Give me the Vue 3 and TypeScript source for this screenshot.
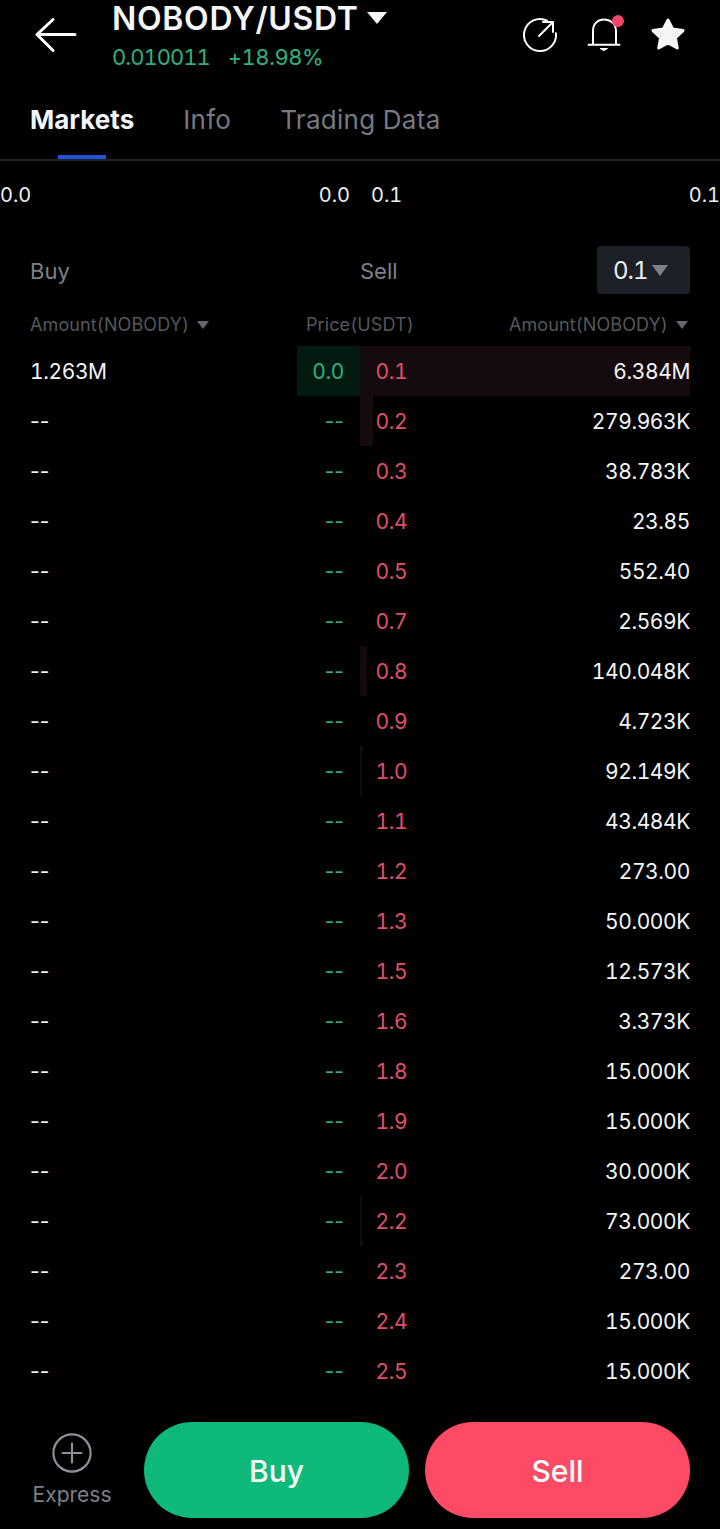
<template>
  <div class="page">
    <header class="top">
      <svg class="back" width="42" height="34" viewBox="0 0 42 34" fill="none" stroke="#fff" stroke-width="3" stroke-linecap="round" stroke-linejoin="round">
        <path d="M2 16.5H40M18 1.5L2 16.5L18 32.5" />
      </svg>
      <div class="pair">
        <div class="pair-name">NOBODY/USDT<i class="caret-white"></i></div>
        <div class="pair-sub"><span class="last">0.010011</span><span class="change">+18.98%</span></div>
      </div>
      <div class="top-icons">
        <svg width="34" height="36" viewBox="0 0 34 36" fill="none" stroke="#fff" stroke-width="2" stroke-linecap="round" stroke-linejoin="round">
          <path d="M24 3.6A16 16 0 1 0 32.9 16.2" />
          <path d="M16 19L30 5M20 5H30V15" />
        </svg>
        <div class="bell">
          <svg width="34" height="36" viewBox="0 0 34 36" fill="none" stroke="#fff" stroke-width="2" stroke-linecap="round" stroke-linejoin="round">
            <path d="M2.5 27.7H33.5M7 27.7V14C7 7 11.5 2.5 18 2.5S30 7 30 14V27.7" />
            <path d="M14.5 31.5H21.5L18 33.5Z" fill="#fff" stroke-width="1" />
          </svg>
          <i class="dot"></i>
        </div>
        <svg width="36" height="34" viewBox="0 0 36 34" fill="#f4f5f6" stroke="#f4f5f6" stroke-width="3" stroke-linejoin="round">
          <path d="M19 3L23.6 12L34 13.6L26.4 20.8L28.3 31L19 26L9.7 31L11.6 20.8L4 13.6L14.4 12Z" />
        </svg>
      </div>
    </header>

    <nav class="tabs">
      <a v-for="(tab, i) in tabs" :key="tab" class="tab" :class="{ active: i === 0 }">{{ tab }}</a>
    </nav>

    <div class="scale">
      <div class="scale-half"><span>0.0</span><span>0.0</span></div>
      <div class="scale-half right"><span>0.1</span><span>0.1</span></div>
    </div>

    <div class="book-head">
      <span class="side left">Buy</span>
      <span class="side">Sell</span>
      <div class="step">0.1<i class="caret-grey"></i></div>
    </div>

    <div class="cols">
      <span class="col-l">Amount(NOBODY)<i class="caret-small"></i></span>
      <span class="col-c">Price(USDT)</span>
      <span class="col-r">Amount(NOBODY)<i class="caret-small"></i></span>
    </div>

    <div class="rows">
      <div v-for="row in rows" :key="row.ask" class="row">
        <div class="bid">
          <i v-if="row.bidDepth" class="bid-depth" :style="{ width: row.bidDepth + 'px' }"></i>
          <span class="amount" :class="{ empty: row.bidAmount === '--' }">{{ row.bidAmount }}</span>
          <span class="bid-price" :class="{ empty: row.bid === '--' }">{{ row.bid }}</span>
        </div>
        <div class="ask">
          <i v-if="row.depth" class="ask-depth" :style="{ width: row.depth + 'px' }"></i>
          <span class="ask-price">{{ row.ask }}</span>
          <span class="amount">{{ row.amount }}</span>
        </div>
      </div>
    </div>

    <footer class="bottom">
      <div class="express">
        <svg width="40" height="40" viewBox="0 0 40 40" fill="none" stroke="#8e9097" stroke-width="2.2" stroke-linecap="round">
          <circle cx="20" cy="20" r="18.6" />
          <path d="M20 10.5V29.5M10.5 20H29.5" />
        </svg>
        <span>Express</span>
      </div>
      <button class="btn buy">Buy</button>
      <button class="btn sell">Sell</button>
    </footer>
  </div>
</template>

<script setup lang="ts">
interface Row {
  bid: string;
  bidAmount: string;
  bidDepth: number;
  ask: string;
  amount: string;
  depth: number;
}

const tabs = ['Markets', 'Info', 'Trading Data'];

const asks: [string, string, number][] = [
  ['0.1', '6.384M', 330],
  ['0.2', '279.963K', 13],
  ['0.3', '38.783K', 0],
  ['0.4', '23.85', 0],
  ['0.5', '552.40', 0],
  ['0.7', '2.569K', 0],
  ['0.8', '140.048K', 7],
  ['0.9', '4.723K', 0],
  ['1.0', '92.149K', 2],
  ['1.1', '43.484K', 0],
  ['1.2', '273.00', 0],
  ['1.3', '50.000K', 0],
  ['1.5', '12.573K', 0],
  ['1.6', '3.373K', 0],
  ['1.8', '15.000K', 0],
  ['1.9', '15.000K', 0],
  ['2.0', '30.000K', 0],
  ['2.2', '73.000K', 2],
  ['2.3', '273.00', 0],
  ['2.4', '15.000K', 0],
  ['2.5', '15.000K', 0],
];

const rows: Row[] = asks.map(([ask, amount, depth], i) => ({
  bid: i === 0 ? '0.0' : '--',
  bidAmount: i === 0 ? '1.263M' : '--',
  bidDepth: i === 0 ? 63 : 0,
  ask,
  amount,
  depth,
}));
</script>

<style>
html,
body {
  background: #000;
}
</style>

<style scoped>
.page {
  width: 720px;
  height: 1529px;
  background: #000;
  color: #fff;
  font-family: Inter, "Noto Sans", "Liberation Sans", sans-serif;
  font-variant-numeric: tabular-nums;
  overflow: hidden;
}

.top {
  height: 80px;
  display: flex;
  position: relative;
}

.back {
  margin: 18px 0 0 35px;
}

.pair {
  margin-left: 35px;
}

.pair-name {
  height: 38px;
  line-height: 38px;
  font-size: 32px;
  font-weight: 600;
  letter-spacing: 0.7px;
  color: #f4f5f6;
  display: flex;
  align-items: center;
}

.caret-white {
  width: 0;
  height: 0;
  margin: 0 0 3px 8px;
  border-left: 10px solid transparent;
  border-right: 10px solid transparent;
  border-top: 12px solid #f4f5f6;
}

.pair-sub {
  margin-top: 6px;
  display: flex;
  gap: 18px;
  font-size: 22px;
  line-height: 26px;
  color: #2cb27e;
}

.last {
  letter-spacing: -1px;
}

.change {
  letter-spacing: -0.5px;
}

.top-icons {
  margin-left: auto;
  padding: 17px 35px 0 0;
  display: flex;
  align-items: flex-start;
  gap: 29px;
}

.bell {
  position: relative;
  width: 34px;
  height: 36px;
}

.bell svg {
  overflow: visible;
}

.dot {
  position: absolute;
  top: -2px;
  right: -4px;
  width: 12px;
  height: 12px;
  border-radius: 50%;
  background: #f0466b;
}

.tabs {
  height: 81px;
  box-sizing: border-box;
  padding: 0 30px;
  display: flex;
  gap: 49px;
  border-bottom: 2px solid #232428;
}

.tab {
  position: relative;
  line-height: 80px;
  font-size: 26px;
  letter-spacing: 0.3px;
  color: #777a82;
}

.tab.active {
  font-weight: 700;
  letter-spacing: 0;
  color: #f4f5f6;
}

.tab.active::after {
  content: "";
  position: absolute;
  left: 28px;
  bottom: 0;
  width: 48px;
  height: 4px;
  background: #2354d8;
}

.scale {
  height: 68px;
  display: flex;
  font-size: 20px;
  line-height: 68px;
  color: #eceef0;
}

.scale-half {
  width: 360px;
  box-sizing: border-box;
  padding-right: 10px;
  display: flex;
  justify-content: space-between;
}

.scale-half.right {
  padding: 0 0 0 11px;
}

.book-head {
  height: 48px;
  margin-top: 17px;
  padding: 0 30px;
  display: flex;
  align-items: center;
  font-size: 22px;
  color: #7d8088;
}

.side {
  padding-top: 2px;
}

.side.left {
  width: 330px;
}

.step {
  margin-left: auto;
  width: 93px;
  height: 48px;
  box-sizing: border-box;
  padding-left: 16px;
  display: flex;
  align-items: center;
  gap: 4px;
  border-radius: 4px;
  background: #1d2026;
  color: #eceef0;
  font-size: 24px;
  letter-spacing: -1px;
}

.caret-grey {
  width: 0;
  height: 0;
  border-left: 8.5px solid transparent;
  border-right: 8.5px solid transparent;
  border-top: 11px solid #7f828a;
}

.cols {
  height: 52px;
  box-sizing: border-box;
  padding: 8px 30px 0;
  display: flex;
  align-items: center;
  font-size: 18px;
  letter-spacing: 0.1px;
  color: #55575d;
}

.col-l {
  width: 276px;
}

.col-r {
  margin: 0 2px 0 auto;
}

.caret-small {
  display: inline-block;
  margin-left: 8px;
  vertical-align: 2px;
  border-left: 6px solid transparent;
  border-right: 6px solid transparent;
  border-top: 8px solid #66686e;
}

.rows {
  height: 1050px;
}

.row {
  height: 50px;
  display: flex;
  font-size: 21px;
  line-height: 52px;
  letter-spacing: -0.4px;
}

.bid,
.ask {
  position: relative;
  width: 360px;
  box-sizing: border-box;
  display: flex;
  justify-content: space-between;
}

.bid {
  padding: 0 16px 0 30px;
}

.ask {
  padding: 0 30px 0 15.5px;
}

.bid-depth,
.ask-depth {
  position: absolute;
  top: 0;
  height: 50px;
}

.bid-depth {
  right: 0;
  background: #031a10;
}

.ask-depth {
  left: 0;
  background: #150a0d;
}

.amount,
.bid-price,
.ask-price {
  position: relative;
}

.amount {
  color: #f4f5f6;
}

.bid-price {
  color: #2cb27e;
}

.ask-price {
  color: #e04f6a;
}

.empty {
  font-variant-numeric: normal;
  letter-spacing: 0;
}

.bottom {
  margin-top: 26px;
  padding: 0 30px 0 33px;
  display: flex;
  align-items: stretch;
  height: 96px;
}

.express {
  width: 78px;
  flex: none;
  padding-top: 11px;
  display: flex;
  flex-direction: column;
  align-items: center;
  font-size: 21px;
  color: #7d8088;
}

.express span {
  margin-top: 10px;
  line-height: 24px;
}

.btn {
  width: 265px;
  height: 96px;
  padding: 2px 0 0;
  border: 0;
  border-radius: 48px;
  color: #f4fff9;
  font-family: inherit;
  font-size: 30px;
  font-weight: 500;
}

.buy {
  margin-left: 33px;
  background: #0fb97a;
}

.sell {
  margin-left: 16px;
  background: #ff4a65;
}
</style>
